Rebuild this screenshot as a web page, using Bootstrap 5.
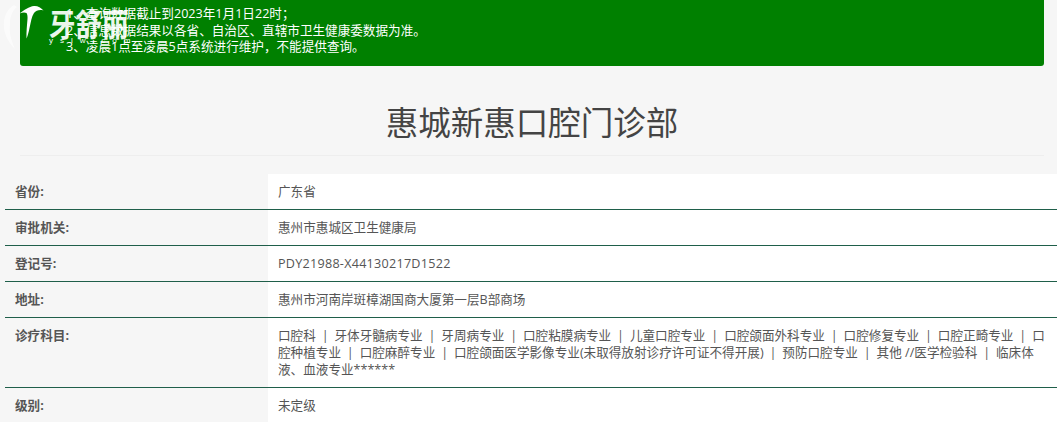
<!DOCTYPE html>
<html lang="zh-CN">
<head>
<meta charset="utf-8">
<title>惠城新惠口腔门诊部</title>
<link rel="stylesheet" href="https://cdn.jsdelivr.net/npm/bootstrap@5.3.0/dist/css/bootstrap.min.css">
<style>
html,body{height:422px;overflow:hidden}
body{background:#f6f6f6;color:#555;font-family:"Open Sans","Noto Sans CJK SC",sans-serif;font-size:12.6px;line-height:17px;position:relative}
.notice{margin:0 13px 0 20px;height:66px;background:#008000;color:#fff;border-radius:0 0 3px 3px;padding:6px 0 0 46px;line-height:16.5px}
.page-title{margin:0 13px 0 20px;height:90px;border-bottom:1px solid #eee;text-align:center;color:#444;font-family:"Noto Sans CJK SC",sans-serif;font-size:32.5px;line-height:110px;font-weight:400}
.info-list{margin:18px 0 0 5px}
.info-row{border-bottom:1px solid #1f5f4a;display:flex}
.info-label{width:263px;flex:none;padding:9px 10px;font-weight:700}
.info-value{flex:1;background:#fff;padding:9px 10px}
.code-text{letter-spacing:.26px}
.sep{padding:0 5.9px}
.site-logo{position:absolute;left:0;top:0;width:135px;height:50px;color:#fff}
.logo-name{position:absolute;left:49px;top:7px;font-family:"Noto Sans CJK SC",serif;font-weight:700;font-size:26.500px;line-height:32px;white-space:nowrap;opacity:.92;transform:scaleY(1.15);transform-origin:left center}
.logo-url{position:absolute;left:49px;top:36px;font-family:"Liberation Sans",sans-serif;font-size:8px;line-height:10px;letter-spacing:7px;white-space:nowrap}
</style>
</head>
<body>
<div class="notice">
<div>1、查询数据截止到2023年1月1日22时；</div>
<div>2、信息数据结果以各省、自治区、直辖市卫生健康委数据为准。</div>
<div>3、凌晨1点至凌晨5点系统进行维护，不能提供查询。</div>
</div>
<div class="site-logo">
<svg width="48" height="50" viewBox="0 0 48 50"><path d="M14 5C7 9 3 17 4 28C5 36 9 43 15 49C11 40 9 32 10 24C10 17 12 11 17 7Z" fill="#fff" opacity=".6"/><path d="M19.500 13.500C24 10 29 6.500 34 6C37.500 5.700 41 7.500 43.500 10.500C39.500 9.500 36 10.500 34 13C31.500 16.500 31 22 29.500 28C28.800 31.500 28 35 26.500 38.500C26.300 32 27 25 27.500 19C27.700 16.500 27.500 14.500 26.500 13C24.500 12 22 12.500 19.500 13.500Z" fill="#fff"/></svg>
<span class="logo-name">牙舒丽</span>
<span class="logo-url">yslw.com</span>
</div>
<h1 class="page-title">惠城新惠口腔门诊部</h1>
<div class="info-list">
<div class="info-row"><div class="info-label">省份:</div><div class="info-value">广东省</div></div>
<div class="info-row"><div class="info-label">审批机关:</div><div class="info-value">惠州市惠城区卫生健康局</div></div>
<div class="info-row"><div class="info-label">登记号:</div><div class="info-value code-text">PDY21988-X44130217D1522</div></div>
<div class="info-row"><div class="info-label">地址:</div><div class="info-value">惠州市河南岸斑樟湖国商大厦第一层B部商场</div></div>
<div class="info-row"><div class="info-label">诊疗科目:</div><div class="info-value">口腔科<span class="sep">|</span>牙体牙髓病专业<span class="sep">|</span>牙周病专业<span class="sep">|</span>口腔粘膜病专业<span class="sep">|</span>儿童口腔专业<span class="sep">|</span>口腔颌面外科专业<span class="sep">|</span>口腔修复专业<span class="sep">|</span>口腔正畸专业<span class="sep">|</span>口腔种植专业<span class="sep">|</span>口腔麻醉专业<span class="sep">|</span>口腔颌面医学影像专业(未取得放射诊疗许可证不得开展)<span class="sep">|</span>预防口腔专业<span class="sep">|</span>其他 //医学检验科<span class="sep">|</span>临床体液、血液专业******</div></div>
<div class="info-row border-0"><div class="info-label">级别:</div><div class="info-value">未定级</div></div>
</div>
<script src="https://cdn.jsdelivr.net/npm/bootstrap@5.3.0/dist/js/bootstrap.bundle.min.js"></script>
</body>
</html>
